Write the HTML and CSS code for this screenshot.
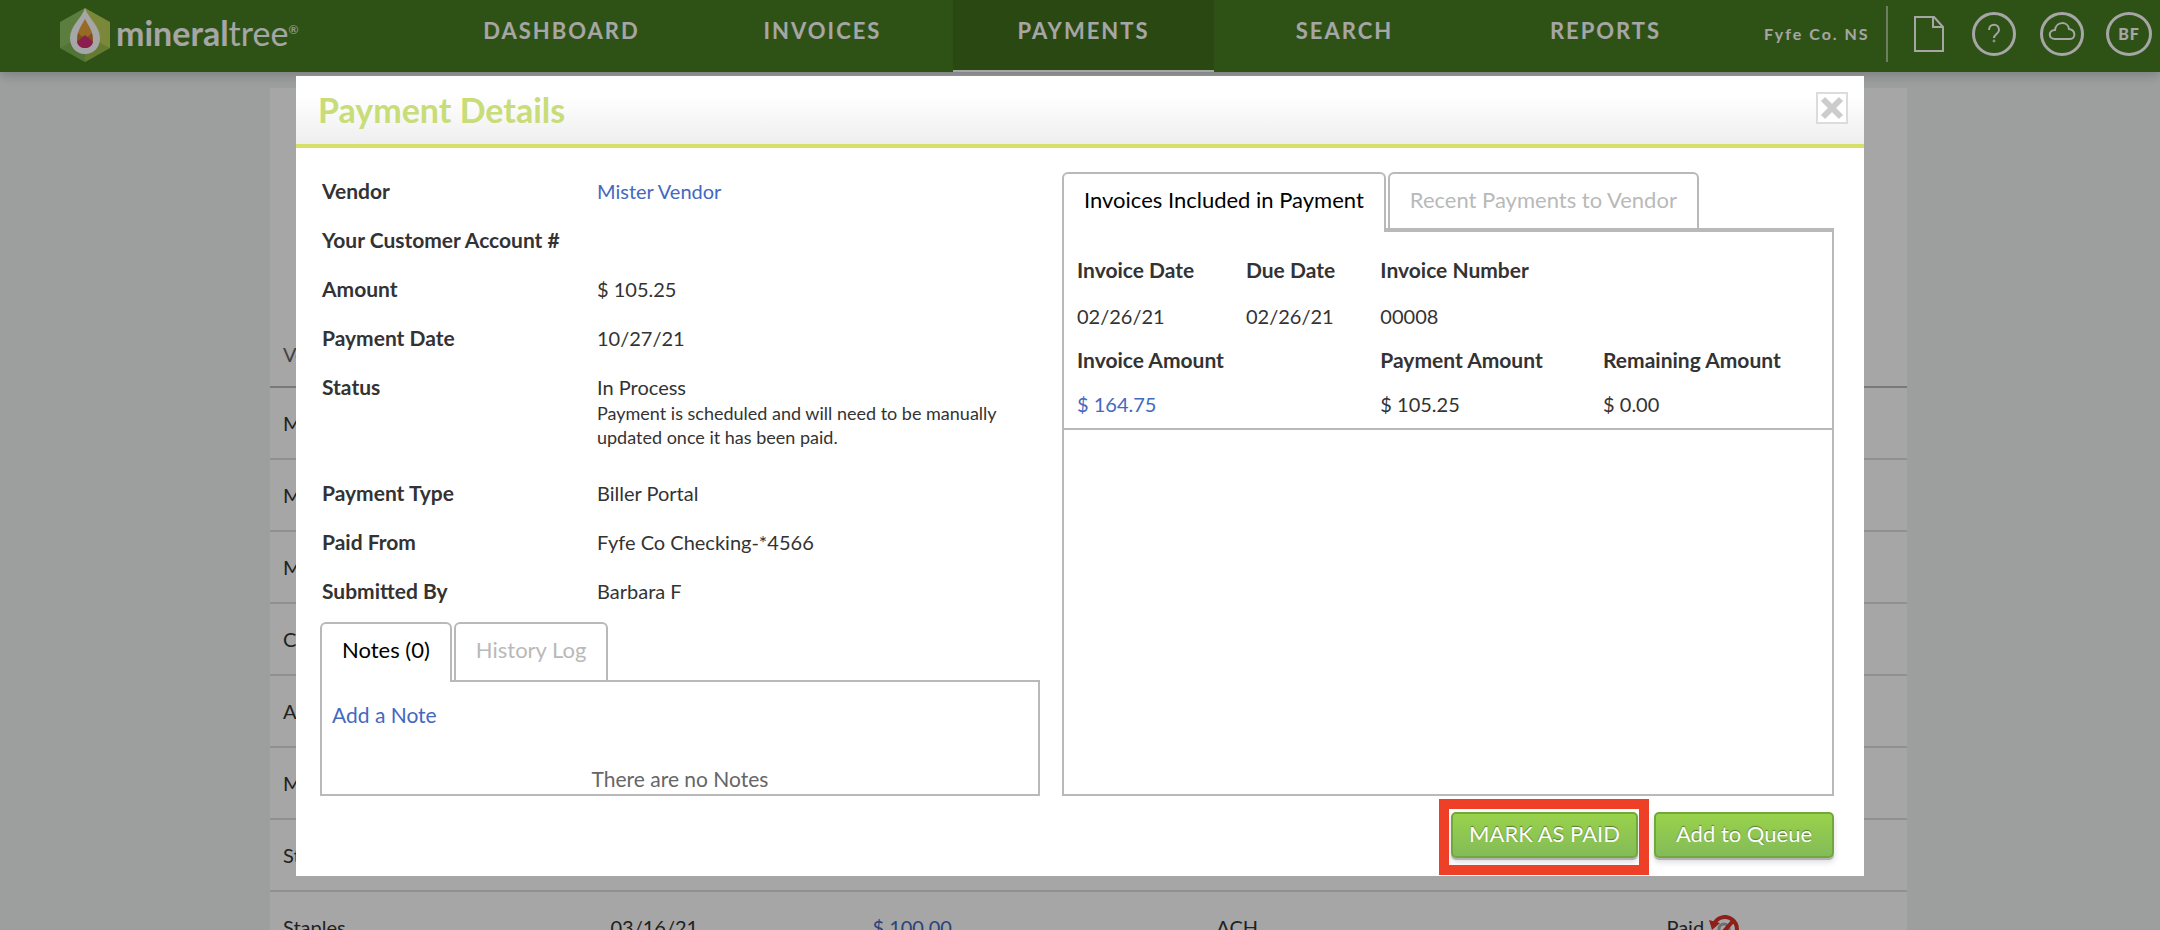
FILE: index.html
```html
<!DOCTYPE html>
<html lang="en">
	<head>
		<meta charset="utf-8">
		<title>Payment Details</title>
		<link rel="stylesheet" href="styles.css">
	</head>
	<body>
		<header class="header">
			<a class="logo" href="#">
				<svg class="logo-mark" viewBox="0 0 50 54" width="50" height="54">
					<path d="M25 0 L0 14 V40 L25 54 Z" fill="#8cc260"/>
					<path d="M25 0 L50 14 V40 L25 54 Z" fill="#bdd158"/>
					<path d="M25 27 L50 40 L25 54 L0 40 Z" fill="#5c9a3c" opacity=".35"/>
					<path d="M25 0 C22 10 10 18 10 30 C10 39 16 46 25 46 C34 46 40 39 40 30 C40 18 28 10 25 0 Z" fill="#fff"/>
					<path d="M25 11 C22 17 17 23 17 31 C17 36 20 40 25 40 C30 40 33 36 33 31 C33 23 28 17 25 11 Z" fill="#e9a33a"/>
					<path d="M18 25 L25 31 L32 25 L33 34 H17 Z" fill="#c47a2c"/>
					<path d="M25 27 L33 34 C32 38 29 40 25 40 C21 40 18 38 17 34 Z" fill="#d42e78"/>
				</svg>
				<span class="logo-text"><b>mineral</b>tree<sup>®</sup></span>
			</a>
			<nav class="nav">
				<a href="#">DASHBOARD</a>
				<a href="#">INVOICES</a>
				<a href="#" class="current">PAYMENTS</a>
				<a href="#">SEARCH</a>
				<a href="#">REPORTS</a>
			</nav>
			<div class="tools">
				<span class="company">Fyfe Co. NS</span>
				<a href="#" class="doc" aria-label="Documents">
					<svg viewBox="0 0 30 37" width="30" height="37" fill="none" stroke="#fff" stroke-width="2">
						<path d="M1 1 H20 L29 11 V35 H1 Z"/>
						<path d="M19 1 V11 H29"/>
					</svg>
				</a>
				<a href="#" class="round" aria-label="Help">
					<svg viewBox="0 0 44 44" width="44" height="44" fill="none" stroke="#fff">
						<path d="M17 18 C17 11 27 11 27 18 C27 22 22 22 22 26" stroke-width="2"/>
						<circle cx="22" cy="29" r="1"/>
						<circle cx="22" cy="22" r="20.5" stroke-width="3"/>
					</svg>
				</a>
				<a href="#" class="round" aria-label="Sync">
					<svg viewBox="0 0 44 44" width="44" height="44" fill="none" stroke="#fff">
						<path d="M15 27 C8 27 8 18 15 18 C16 9 28 9 29 17 C36 18 36 27 30 27 Z" stroke-width="2"/>
						<circle cx="22" cy="22" r="20.5" stroke-width="3"/>
					</svg>
				</a>
				<a href="#" class="user">BF</a>
			</div>
		</header>

		<main class="page">
			<table class="payments">
				<thead>
					<tr><th>Vendor</th><th></th><th></th><th></th><th></th></tr>
				</thead>
				<tbody>
					<tr><td>M</td><td></td><td></td><td></td><td></td></tr>
					<tr><td>M</td><td></td><td></td><td></td><td></td></tr>
					<tr><td>M</td><td></td><td></td><td></td><td></td></tr>
					<tr><td>C</td><td></td><td></td><td></td><td></td></tr>
					<tr><td>A</td><td></td><td></td><td></td><td></td></tr>
					<tr><td>M</td><td></td><td></td><td></td><td></td></tr>
					<tr><td>St</td><td></td><td></td><td></td><td></td></tr>
					<tr>
						<td>Staples</td>
						<td>03/16/21</td>
						<td><a href="#">$ 100.00</a></td>
						<td>ACH</td>
						<td>
							Paid
							<svg class="void" viewBox="0 0 30 28" width="30" height="28" fill="none" stroke="#d8322a">
								<circle cx="15" cy="14" r="5" stroke="#aaa" stroke-width="3"/>
								<path d="M5 9 A12 12 0 1 1 5 19 M24 6 L9 23" stroke-width="4"/>
								<path d="M0 5 L11 8 L3 15 Z" fill="#d8322a" stroke="none"/>
							</svg>
						</td>
					</tr>
				</tbody>
			</table>
		</main>

		<div class="overlay">
			<section class="modal" role="dialog" aria-labelledby="title">
				<div class="modal-head">
					<h1 id="title">Payment Details</h1>
					<button class="close" type="button" aria-label="Close">
						<svg viewBox="0 0 28 28" width="28" height="28" stroke="#ccc" stroke-width="6">
							<path d="M5 5 L23 23 M23 5 L5 23"/>
						</svg>
					</button>
				</div>

				<div class="modal-body">
					<div class="col">
						<dl class="details">
							<dt>Vendor</dt>
							<dd><a href="#">Mister Vendor</a></dd>
							<dt>Your Customer Account #</dt>
							<dd></dd>
							<dt>Amount</dt>
							<dd>$ 105.25</dd>
							<dt>Payment Date</dt>
							<dd>10/27/21</dd>
							<dt>Status</dt>
							<dd class="status">
								In Process
								<p>Payment is scheduled and will need to be manually updated once it has been paid.</p>
							</dd>
							<dt>Payment Type</dt>
							<dd>Biller Portal</dd>
							<dt>Paid From</dt>
							<dd>Fyfe Co Checking-*4566</dd>
							<dt>Submitted By</dt>
							<dd>Barbara F</dd>
						</dl>
						<div class="tabs">
							<button type="button" class="current">Notes (0)</button>
							<button type="button">History Log</button>
						</div>
						<div class="panel notes">
							<a href="#">Add a Note</a>
							<p>There are no Notes</p>
						</div>
					</div>

					<div class="col">
						<div class="tabs">
							<button type="button" class="current">Invoices Included in Payment</button>
							<button type="button">Recent Payments to Vendor</button>
						</div>
						<div class="panel invoices">
							<table>
								<tr><th>Invoice Date</th><th>Due Date</th><th>Invoice Number</th><th></th></tr>
								<tr><td>02/26/21</td><td>02/26/21</td><td>00008</td><td></td></tr>
								<tr><th>Invoice Amount</th><th></th><th>Payment Amount</th><th>Remaining Amount</th></tr>
								<tr><td><a href="#">$ 164.75</a></td><td></td><td>$ 105.25</td><td>$ 0.00</td></tr>
							</table>
						</div>
					</div>
				</div>

				<div class="modal-foot">
					<span class="highlight"><button type="button" class="btn">MARK AS PAID</button></span>
					<button type="button" class="btn">Add to Queue</button>
				</div>
			</section>
		</div>
	</body>
</html>
```

FILE: styles.css
```css
* {
	box-sizing: border-box;
	margin: 0;
	padding: 0;
}
html, body {
	height: 100%;
}
body {
	overflow: hidden;
	background: #f0f5f3;
	color: #333;
	font: 20px/24px Lato, "Liberation Sans", sans-serif;
}
a {
	color: #4468c0;
	text-decoration: none;
}
button {
	font: inherit;
	cursor: pointer;
}
svg {
	display: block;
}

/* top bar */
.header {
	display: flex;
	position: relative;
	height: 72px;
	background: #487e23;
	box-shadow: 0 2px 12px rgba(0, 0, 30, .25);
}
.header a {
	color: #fff;
}
.logo {
	display: flex;
	flex: none;
	gap: 6px;
	width: 431px;
	padding: 8px 0 0 60px;
}
.logo-text {
	font-size: 34px;
	line-height: 50px;
	font-weight: 400;
}
.logo-text b {
	font-weight: 700;
}
.logo-text sup {
	font-size: 12px;
	line-height: 12px;
	vertical-align: 12px;
}
.nav {
	display: flex;
	flex: 1;
}
.nav a {
	flex: 1;
	padding-top: 19px;
	font-size: 22px;
	font-weight: 700;
	letter-spacing: 2px;
	text-align: center;
}
.nav .current {
	background: #3f6f1d;
	border-bottom: 2px solid #fff;
}
.tools {
	display: flex;
	flex: none;
	align-items: center;
	width: 424px;
	padding: 0 8px 4px 28px;
	color: #fff;
}
.company {
	flex: 1;
	font-size: 16px;
	font-weight: 700;
	letter-spacing: 2px;
	white-space: nowrap;
}
.doc {
	display: flex;
	align-items: center;
	height: 56px;
	margin-right: 4px;
	padding-left: 26px;
	border-left: 2px solid #a9c494;
}
.round {
	margin-left: 24px;
}
.user {
	width: 46px;
	height: 44px;
	margin-left: 22px;
	border: 3px solid #fff;
	border-radius: 50%;
	font-size: 16px;
	line-height: 38px;
	font-weight: 900;
	letter-spacing: 1px;
	text-align: center;
}

/* payments list */
.page {
	margin: 16px 11.7% 0 12.5%;
	background: #fff;
}
.payments {
	width: 100%;
	table-layout: fixed;
	border-collapse: collapse;
}
.payments th, .payments td {
	height: 72px;
	padding: 0 13px;
	border-bottom: 2px solid #ddd;
	text-align: left;
}
.payments th {
	height: 299px;
	padding-bottom: 20px;
	border-color: #bbb;
	color: #666;
	font-weight: 400;
	vertical-align: bottom;
}
.payments th:nth-child(1) {
	width: 20%;
}
.payments th:nth-child(2) {
	width: 16%;
}
.payments th:nth-child(3) {
	width: 21%;
}
.payments th:nth-child(4) {
	width: 27.5%;
}
.void {
	display: inline-block;
	margin: -4px 0;
	vertical-align: middle;
}

/* modal */
.overlay {
	position: fixed;
	top: 0;
	right: 0;
	bottom: 0;
	left: 0;
	padding: 76px 24px 24px;
	background: rgba(0, 0, 0, .35);
}
.modal {
	max-width: 1568px;
	margin: 0 auto;
	background: #fff;
}
.modal-head {
	display: flex;
	justify-content: space-between;
	align-items: flex-start;
	height: 72px;
	padding: 16px 16px 0 22px;
	border-bottom: 4px solid #d5e069;
	background: linear-gradient(#fff 30%, #eee);
}
.modal-head h1 {
	color: #c8dc78;
	font-size: 34px;
	line-height: 36px;
}
.close {
	width: 32px;
	height: 32px;
	border: 2px solid #dcdcdc;
	background: #fff;
}
.modal-body {
	display: grid;
	grid-template-columns: 720fr 772fr;
	gap: 22px;
	padding: 24px 30px 0 24px;
}
.col {
	display: flex;
	flex-direction: column;
}
.details {
	display: grid;
	grid-template-columns: 275px 1fr;
	row-gap: 25px;
	padding: 7px 2px 19px;
}
.details dt, .invoices th {
	font-size: 21px;
	font-weight: 700;
}
.details .status {
	padding-bottom: 7px;
}
.status p {
	max-width: 420px;
	padding-top: 2px;
	font-size: 18px;
}
.tabs {
	display: flex;
	gap: 2px;
}
.tabs button {
	height: 58px;
	padding: 0 20px 4px;
	border: 2px solid #b9b9b9;
	border-bottom: 0;
	border-radius: 6px 6px 0 0;
	background: none;
	color: #b9b9b9;
	font-size: 22px;
}
.tabs .current {
	position: relative;
	z-index: 1;
	height: 60px;
	margin-bottom: -2px;
	padding-bottom: 6px;
	background: #fff;
	color: #000;
}
.panel {
	border: 2px solid #b9b9b9;
}
.notes {
	padding: 21px 10px 3px;
	font-size: 21px;
}
.notes p {
	padding-top: 40px;
	color: #666;
	text-align: center;
}
.invoices {
	flex: 1;
	margin-top: -2px;
	border-top-width: 4px;
}
.invoices table {
	width: 100%;
	padding: 26px 0 0;
	border-bottom: 2px solid #b9b9b9;
	border-spacing: 0;
	table-layout: fixed;
}
.invoices th, .invoices td {
	height: 44px;
	padding-left: 13px;
	text-align: left;
	vertical-align: top;
}
.invoices tr:first-child th {
	width: 22%;
	height: 46px;
}
.invoices tr:first-child th:nth-child(2) {
	width: 17.5%;
}
.invoices tr:first-child th:nth-child(3) {
	width: 29%;
}
.invoices tr:first-child th:last-child {
	width: 31.5%;
}
.invoices tr:last-child td {
	height: 36px;
}
.modal-foot {
	display: flex;
	justify-content: flex-end;
	gap: 16px;
	padding: 16px 30px 18px;
}
.btn {
	display: block;
	min-width: 180px;
	height: 46px;
	padding: 0 16px 2px;
	border: 2px solid #70a83c;
	border-radius: 5px;
	background: linear-gradient(#99d24a, #84bb59);
	box-shadow: 0 2px 0 #b5b0b8, 0 4px 6px rgba(0, 0, 0, .15);
	color: #fff;
	font-size: 22px;
	text-shadow: 0 -1px 1px rgba(0, 0, 0, .4);
}
/* frame drawn over the space round the button */
.highlight {
	position: relative;
}
.highlight::after {
	content: "";
	position: absolute;
	top: -13px;
	right: -11px;
	bottom: -17px;
	left: -12px;
	border: 10px solid #ee4027;
	pointer-events: none;
}
```
